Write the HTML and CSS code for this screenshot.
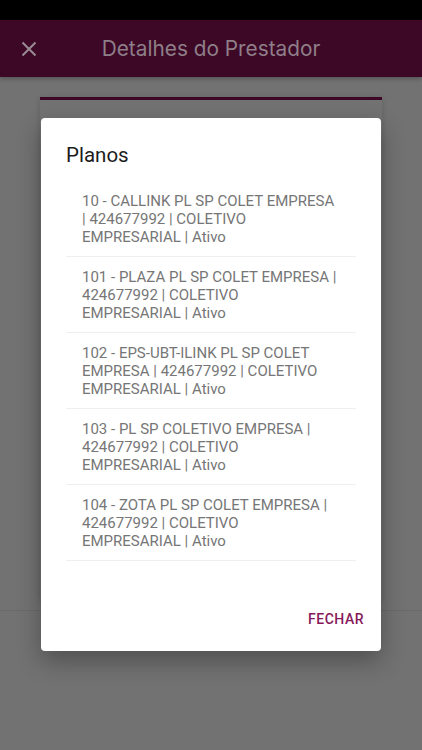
FILE: index.html
```html
<!DOCTYPE html>
<html>
	<head>
		<meta charset="utf-8">
		<title>Detalhes do Prestador</title>
		<link rel="stylesheet" href="styles.css">
	</head>
	<body>

		<div id="app">
			<div class="status"></div>
			<div class="topbar">
				<a href="javascript:;" class="close">
					<svg width="16" height="16" viewBox="0 0 16 16"><path d="M1.5 1.5L14.5 14.5M14.5 1.5L1.5 14.5" stroke="#9a8a94" stroke-width="2" fill="none"/></svg>
				</a>
				<h1>Detalhes do Prestador</h1>
			</div>
			<div class="content">
				<div class="card"></div>
				<div class="divider"></div>
			</div>

			<!-- dialogo de planos -->
			<div class="dialog">
				<h2>Planos</h2>
				<ul class="plans">
					<li>10 - CALLINK PL SP COLET EMPRESA | 424677992 | COLETIVO EMPRESARIAL | Ativo</li>
					<li>101 - PLAZA PL SP COLET EMPRESA | 424677992 | COLETIVO EMPRESARIAL | Ativo</li>
					<li>102 - EPS-UBT-ILINK PL SP COLET EMPRESA | 424677992 | COLETIVO EMPRESARIAL | Ativo</li>
					<li>103 - PL SP COLETIVO EMPRESA | 424677992 | COLETIVO EMPRESARIAL | Ativo</li>
					<li>104 - ZOTA PL SP COLET EMPRESA | 424677992 | COLETIVO EMPRESARIAL | Ativo</li>
				</ul>
				<div class="actions">
					<a href="javascript:;">FECHAR</a>
				</div>
			</div>
		</div>

	</body>
</html>
```

FILE: styles.css
```css
* {
	margin: 0;
	padding: 0;
}

body {
	background-color: #727272;
	font-family: Roboto, "Liberation Sans", sans-serif;
}

#app {
	width: 422px;
	height: 750px;
	position: relative;
	overflow: hidden;
	background-color: #727272;
}

.status {
	height: 20px;
	background-color: #000;
}

.topbar {
	height: 57px;
	background-color: #3d0826;
	display: flex;
	align-items: center;
	box-shadow: 0 2px 4px rgba(0,0,0,0.25);
	position: relative;
}
.topbar .close {
	display: flex;
	width: 16px;
	height: 16px;
	margin-left: 21px;
}
.topbar h1 {
	flex: 1;
	text-align: center;
	font-family: Inter, Roboto, sans-serif;
	font-size: 20.8px;
	font-weight: 400;
	color: #8e7f89;
	margin-right: 37px;
}

.content {
	padding-top: 20px;
}
.card {
	margin: 0 40px;
	height: 500px;
	border-top: 3px solid #3d0826;
	box-shadow: 0 1px 6px rgba(0,0,0,0.15);
}
.divider {
	margin-top: 10px;
	height: 1px;
	background-color: #6a6a6a;
}

.dialog {
	position: absolute;
	left: 41px;
	top: 118px;
	width: 340px;
	height: 533px;
	background-color: #fff;
	border-radius: 4px;
	box-shadow: 0 10px 24px rgba(0,0,0,0.3);
	display: flex;
	flex-direction: column;
}
.dialog h2 {
	font-size: 20.5px;
	font-weight: 400;
	color: #1c1c1c;
	padding: 25px 25px 0;
	line-height: 24px;
}
.plans {
	list-style: none;
	margin: 14px 25px 0;
}
.plans li {
	padding: 11px 16px 10px 16px;
	font-size: 15px;
	line-height: 18px;
	color: #767676;
	border-bottom: 1px solid #efefef;
}
.actions {
	margin-top: auto;
	display: flex;
	justify-content: flex-end;
	padding: 0 17px 24px;
}
.actions a {
	text-decoration: none;
	font-size: 14px;
	font-weight: 500;
	color: #86195a;
	letter-spacing: 0.5px;
}
```
